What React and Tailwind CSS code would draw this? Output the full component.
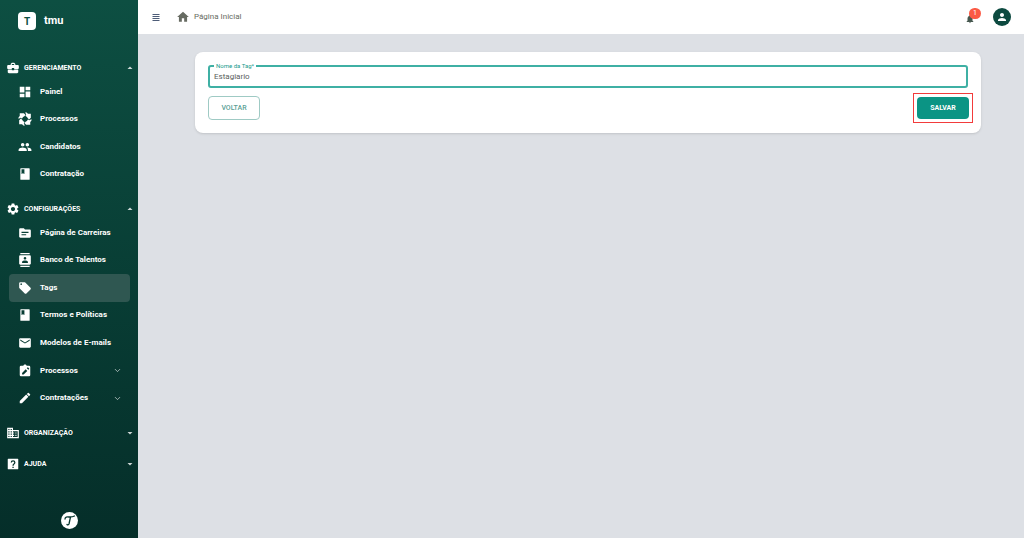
import React from "react";
import {
  MdArrowDropDown,
  MdArrowDropUp,
  MdBusinessCenter,
  MdContacts,
  MdCreate,
  MdDashboard,
  MdDomain,
  MdEmail,
  MdGroup,
  MdHome,
  MdNotifications,
  MdPerson,
  MdSettings,
  MdSource,
} from "react-icons/md";
import { FiChevronDown } from "react-icons/fi";

const CycleIcon = ({ className }) => (
  <svg viewBox="0 0 24 24" fill="currentColor" className={className}>
    <path d="M3 2h7l3 3-3 3H9l-2 3-3-1-3 2V9l2-2zM22 3v7l-3 3-3-3V9l-3-2 1-3-2-3h3l2 2zM21 22h-7l-3-3 3-3h1l2-3 3 1 3-2v3l-2 2zM2 21v-7l3-3 3 3v1l3 2-1 3 2 3H9l-2-2z" />
  </svg>
);

const BookmarkIcon = ({ className }) => (
  <svg viewBox="0 0 24 24" fill="currentColor" fillRule="evenodd" className={className}>
    <path d="M19 2H5a1 1 0 0 0-1 1v18a1 1 0 0 0 1 1h14a1 1 0 0 0 1-1V3a1 1 0 0 0-1-1zM6 4h5v8l-2.5-1.5L6 12V4z" />
  </svg>
);

const TagIcon = ({ className }) => (
  <svg viewBox="0 0 24 24" fill="currentColor" fillRule="evenodd" className={className}>
    <path d="M21.41 11.58l-9-9C12.05 2.22 11.55 2 11 2H4c-1.1 0-2 .9-2 2v7c0 .55.22 1.05.59 1.42l9 9c.36.36.86.58 1.41.58s1.05-.22 1.41-.59l7-7c.37-.36.59-.86.59-1.41s-.23-1.06-.59-1.42zM5.5 7a1.5 1.5 0 1 1 0-3 1.5 1.5 0 0 1 0 3z" />
  </svg>
);

const ClipboardEditIcon = ({ className }) => (
  <svg viewBox="0 0 24 24" fill="currentColor" fillRule="evenodd" className={className}>
    <path d="M19 3h-4.18C14.4 1.84 13.3 1 12 1s-2.4.84-2.82 2H5a2 2 0 0 0-2 2v14a2 2 0 0 0 2 2h14a2 2 0 0 0 2-2V5a2 2 0 0 0-2-2zM7 15.3V18h2.7l6.2-6.2-2.7-2.7L7 15.3zm10.8-5.4l-2.7-2.7 1.2-1.2c.3-.3.8-.3 1.1 0l1.6 1.6c.3.3.3.8 0 1.1l-1.2 1.2z" />
  </svg>
);

const HelpIcon = ({ className }) => (
  <svg viewBox="0 0 24 24" fill="currentColor" fillRule="evenodd" className={className}>
    <path d="M4 3h16a1 1 0 0 1 1 1v16a1 1 0 0 1-1 1H4a1 1 0 0 1-1-1V4a1 1 0 0 1 1-1zM11 16.5h2.2v2.2H11zM8 9.5h2.1a2 2 0 1 1 4 0c0 2-3.1 1.9-3.1 5.5h2.2c0-2.4 3-2.6 3-5.5a4.1 4.1 0 0 0-8.2 0z" />
  </svg>
);

const groups = [
  {
    title: "GERENCIAMENTO",
    icon: MdBusinessCenter,
    height: "min-h-[110px]",
    items: [
      { label: "Painel", icon: MdDashboard },
      { label: "Processos", icon: CycleIcon },
      { label: "Candidatos", icon: MdGroup },
      { label: "Contratação", icon: BookmarkIcon },
    ],
  },
  {
    title: "CONFIGURAÇÕES",
    icon: MdSettings,
    height: "min-h-[193px]",
    items: [
      { label: "Página de Carreiras", icon: MdSource },
      { label: "Banco de Talentos", icon: MdContacts },
      { label: "Tags", icon: TagIcon, active: true },
      { label: "Termos e Políticas", icon: BookmarkIcon },
      { label: "Modelos de E-mails", icon: MdEmail },
      { label: "Processos", icon: ClipboardEditIcon, expandable: true },
      { label: "Contratações", icon: MdCreate, expandable: true },
    ],
  },
  { title: "ORGANIZAÇÃO", icon: MdDomain },
  { title: "AJUDA", icon: HelpIcon },
];

const NavItem = ({ item }) => {
  const Icon = item.icon;
  return (
    <li className="flex">
      <a
        href="#"
        className={`flex w-full items-center rounded pl-[9px] pr-2 text-[8px] font-bold ${
          item.active ? "bg-[#2f5751]" : ""
        }`}
      >
        <Icon className="size-[14px]" />
        <span className="ml-2">{item.label}</span>
        {item.expandable && <FiChevronDown className="ml-auto size-[9px] opacity-80" />}
      </a>
    </li>
  );
};

const NavGroup = ({ group }) => {
  const Icon = group.icon;
  const Caret = group.items ? MdArrowDropUp : MdArrowDropDown;
  return (
    <div>
      <button className="flex h-5 w-full items-center pl-[6px] pr-[2px] text-[7px] font-bold">
        <Icon className="size-[14px]" />
        <span className="ml-1">{group.title}</span>
        <Caret className="ml-auto size-3 opacity-80" />
      </button>
      {group.items && (
        <ul className={`grid auto-rows-fr pl-[9px] pr-2 ${group.height}`}>
          {group.items.map((item) => (
            <NavItem key={item.label} item={item} />
          ))}
        </ul>
      )}
    </div>
  );
};

const Sidebar = () => {
  return (
    <aside className="flex w-[138px] shrink-0 flex-col bg-linear-to-b from-[#0d4f42] to-[#052e29] text-white">
      <div className="flex items-center gap-2 pl-[18px] pt-3">
        <span className="flex size-[18px] items-center justify-center rounded bg-white text-[10px] font-bold text-[#0d4f42]">
          T
        </span>
        <span className="text-[11px] font-bold">tmu</span>
      </div>
      <nav className="mt-7 flex flex-col gap-[11px]">
        {groups.map((group) => (
          <NavGroup key={group.title} group={group} />
        ))}
      </nav>
      <div className="mt-auto flex justify-center pb-[9px]">
        <svg viewBox="0 0 34 34" className="size-[17px]">
          <circle cx="17" cy="17" r="17" fill="#fff" />
          <path
            d="M8 14c0-4 4-5 8-4 4 0 8 0 11-2M19 10c-1 5-2 9-3 14-1 2-3 2-4 1"
            fill="none"
            stroke="#07362f"
            strokeWidth="2.6"
            strokeLinecap="round"
          />
        </svg>
      </div>
    </aside>
  );
};

const Header = () => {
  return (
    <header className="flex h-[34px] items-center bg-white pl-[14px] pr-[13px] text-[#676b62]">
      <button aria-label="Menu" className="text-[#4e5d78]">
        <svg viewBox="0 0 8 8" className="size-2" fill="currentColor">
          <path d="M.5 1h7v1h-7zM.5 3h7v1h-7zM.5 5h7v1h-7zM.5 7h7v1h-7z" />
        </svg>
      </button>
      <a href="#" className="ml-4 flex items-center gap-1 text-[8px]">
        <MdHome className="size-[14px]" />
        Página Inicial
      </a>
      <button aria-label="Notificações" className="relative ml-auto mr-[18px]">
        <MdNotifications className="mt-1 size-[10px] text-[#46584f]" />
        <span className="absolute -top-[2px] left-1 flex h-[11px] w-3 items-center justify-center rounded-full bg-[#fb5a45] text-[7px] text-white">
          1
        </span>
      </button>
      <button
        aria-label="Perfil"
        className="flex size-[18px] items-center justify-center rounded-full bg-[#0d4a40] text-white"
      >
        <MdPerson className="size-3" />
      </button>
    </header>
  );
};

const TagForm = () => {
  return (
    <form className="rounded-lg bg-white px-[13px] py-[10px] shadow">
      <fieldset className="rounded-[3px] border-2 border-[#3fb0a4] px-1">
        <legend className="px-[2px] text-[6px] leading-[8px] text-[#169b8b]">
          <label htmlFor="tag">Nome da Tag*</label>
        </legend>
        <input
          id="tag"
          type="text"
          defaultValue="Estagiario"
          className="block h-4 w-full pb-1 text-[8px] text-[#5a605c] outline-none"
        />
      </fieldset>
      <div className="mt-[5px] flex items-center justify-between">
        <button
          type="button"
          className="h-6 w-[52px] rounded border border-[#9fcac4] text-[7px] font-medium text-[#5b9f96]"
        >
          VOLTAR
        </button>
        <div className="-mr-[5px] border border-[#f23b3b] p-[3px]">
          <button
            type="submit"
            className="block h-[22px] w-[52px] rounded bg-[#0b9484] text-[7px] font-bold text-white"
          >
            SALVAR
          </button>
        </div>
      </div>
    </form>
  );
};

const App = () => {
  return (
    <div className="flex min-h-screen bg-[#dde0e5] font-[Roboto,sans-serif]">
      <Sidebar />
      <div className="flex-1">
        <Header />
        <main className="pl-[57px] pr-[43px] pt-[18px]">
          <TagForm />
        </main>
      </div>
    </div>
  );
};

export default App;
